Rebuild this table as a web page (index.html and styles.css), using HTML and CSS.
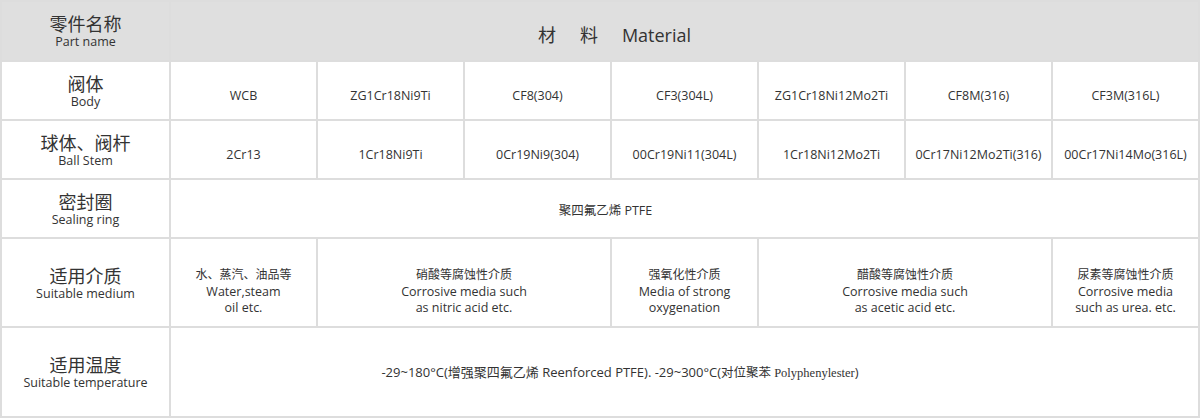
FILE: index.html
```html
<!DOCTYPE html>
<html lang="zh">
<head>
<meta charset="utf-8">
<title>Material</title>
<link rel="stylesheet" href="styles.css">
</head>
<body>
<table class="spec">
  <colgroup>
    <col class="c-label">
    <col class="c-val"><col class="c-val"><col class="c-val"><col class="c-val"><col class="c-val"><col class="c-val"><col class="c-val">
  </colgroup>
  <tr class="r-head">
    <td class="label"><span class="zh">零件名称</span><span class="en">Part name</span></td>
    <td class="head-title" colspan="7"><span class="sp">材</span><span class="sp">料</span>Material</td>
  </tr>
  <tr class="r-std">
    <td class="label"><span class="zh">阀体</span><span class="en">Body</span></td>
    <td class="val">WCB</td>
    <td class="val">ZG1Cr18Ni9Ti</td>
    <td class="val">CF8(304)</td>
    <td class="val">CF3(304L)</td>
    <td class="val">ZG1Cr18Ni12Mo2Ti</td>
    <td class="val">CF8M(316)</td>
    <td class="val">CF3M(316L)</td>
  </tr>
  <tr class="r-std">
    <td class="label"><span class="zh">球体、阀杆</span><span class="en">Ball Stem</span></td>
    <td class="val">2Cr13</td>
    <td class="val">1Cr18Ni9Ti</td>
    <td class="val">0Cr19Ni9(304)</td>
    <td class="val">00Cr19Ni11(304L)</td>
    <td class="val">1Cr18Ni12Mo2Ti</td>
    <td class="val">0Cr17Ni12Mo2Ti(316)</td>
    <td class="val">00Cr17Ni14Mo(316L)</td>
  </tr>
  <tr class="r-std">
    <td class="label"><span class="zh">密封圈</span><span class="en">Sealing ring</span></td>
    <td class="val wide" colspan="7">聚四氟乙烯 PTFE</td>
  </tr>
  <tr class="r-tall">
    <td class="label"><span class="zh">适用介质</span><span class="en">Suitable medium</span></td>
    <td class="med"><span class="mz">水、蒸汽、油品等</span><br>Water,steam<br>oil etc.</td>
    <td class="med" colspan="2"><span class="mz">硝酸等腐蚀性介质</span><br>Corrosive media such<br>as nitric acid etc.</td>
    <td class="med"><span class="mz">强氧化性介质</span><br>Media of strong<br>oxygenation</td>
    <td class="med" colspan="2"><span class="mz">醋酸等腐蚀性介质</span><br>Corrosive media such<br>as acetic acid etc.</td>
    <td class="med"><span class="mz">尿素等腐蚀性介质</span><br>Corrosive media<br>such as urea. etc.</td>
  </tr>
  <tr class="r-last">
    <td class="label"><span class="zh">适用温度</span><span class="en">Suitable temperature</span></td>
    <td class="temp" colspan="7">-29~180°C(增强聚四氟乙烯 Reenforced PTFE). -29~300°C(<span class="serif">对位聚苯 Polyphenylester</span>)</td>
  </tr>
</table>
</body>
</html>
```

FILE: styles.css
```css
html, body {
  margin: 0;
  padding: 0;
  background: #ffffff;
}

body {
  font-family: "Open Sans", "Noto Sans CJK SC", sans-serif;
  color: #333333;
}

.spec {
  width: 1200px;
  border-collapse: collapse;
  table-layout: fixed;
  border: 2px solid #dddddd;
}

.c-label { width: 169px; }

.spec td {
  border: 2px solid #dddddd;
  text-align: center;
  vertical-align: middle;
  padding: 0;
}

.r-head { height: 60px; }
.r-std { height: 59px; }
.r-tall { height: 89px; }
.r-last { height: 90px; }

.r-head td {
  background: #dfdfdf;
}

.label .zh {
  display: block;
  font-family: "Noto Sans CJK SC", sans-serif;
  font-size: 18px;
  line-height: 22px;
  color: #333333;
}

.label .en {
  display: block;
  font-size: 12.5px;
  line-height: 16px;
  color: #333333;
}

.head-title {
  font-size: 18px;
  line-height: 24px;
  padding: 6px 140px 0 0 !important;
  color: #333333;
}

.head-title .sp {
  font-family: "Noto Sans CJK SC", sans-serif;
  margin-right: 24px;
}

.val {
  font-size: 12.5px;
  line-height: 18px;
  padding-top: 10px !important;
}

.val.wide {
  padding: 4px 158px 0 0 !important;
}

.med {
  font-size: 12.5px;
  line-height: 16.5px;
  padding-top: 18px !important;
}

.mz {
  font-family: "Noto Sans CJK SC", sans-serif;
  font-size: 12px;
}

.temp {
  font-size: 13px;
  line-height: 18px;
  padding: 0 129px 0 0 !important;
}

.serif {
  font-family: "Liberation Serif", "Noto Sans CJK SC", serif;
  font-size: 12.5px;
}
```
